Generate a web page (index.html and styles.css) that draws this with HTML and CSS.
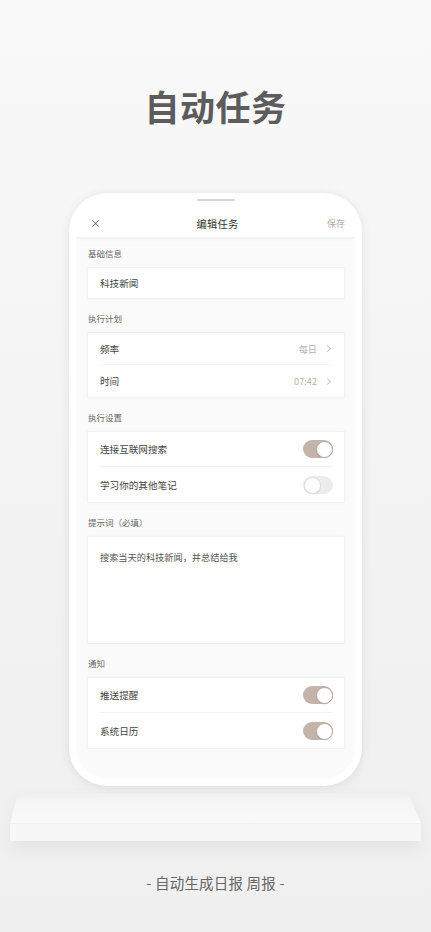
FILE: index.html
```html
<!DOCTYPE html>
<html lang="zh-CN">
<head>
    <meta charset="UTF-8">
    <meta name="viewport" content="width=device-width, initial-scale=1.0">
    <title>自动任务</title>

    <link rel="stylesheet" href="styles.css">
</head>
<body>

    <div class="page">
        <h1 class="headline">自动任务</h1>

        <div class="phone">
            <span class="side-key key-a"></span>
            <span class="side-key key-b"></span>
            <span class="side-key key-c"></span>
            <div class="notch"></div>

            <div class="screen">
                <div class="topbar">
                    <span class="close">&times;</span>
                    <span class="topbar-title">编辑任务</span>
                    <span class="save">保存</span>
                </div>

                <div class="content">
                    <div class="label first">基础信息</div>
                    <div class="card single">科技新闻</div>

                    <div class="label">执行计划</div>
                    <div class="card">
                        <div class="row">
                            <span>频率</span>
                            <span class="value">每日<i class="chev"></i></span>
                        </div>
                        <div class="row">
                            <span>时间</span>
                            <span class="value">07:42<i class="chev"></i></span>
                        </div>
                    </div>

                    <div class="label">执行设置</div>
                    <div class="card">
                        <div class="row tall">
                            <span>连接互联网搜索</span>
                            <span class="toggle on"></span>
                        </div>
                        <div class="row tall">
                            <span>学习你的其他笔记</span>
                            <span class="toggle"></span>
                        </div>
                    </div>

                    <div class="label">提示词（必填）</div>
                    <div class="card prompt">搜索当天的科技新闻，并总结给我</div>

                    <div class="label">通知</div>
                    <div class="card">
                        <div class="row tall">
                            <span>推送提醒</span>
                            <span class="toggle on"></span>
                        </div>
                        <div class="row tall">
                            <span>系统日历</span>
                            <span class="toggle on"></span>
                        </div>
                    </div>
                </div>
            </div>
        </div>

        <div class="shelf">
            <div class="shelf-top"></div>
            <div class="shelf-front"></div>
        </div>

        <p class="caption">- 自动生成日报 周报 -</p>
    </div>

</body>
</html>
```

FILE: styles.css
```css
body {
    margin: 0;
    background: linear-gradient(#f9f9fa, #f2f2f3 60%, #f0f0f1);
    font-family: "Noto Sans CJK SC", "Noto Sans", sans-serif;
}

.page {
    width: 431px;
    height: 932px;
    display: flex;
    flex-direction: column;
    align-items: center;
    overflow: hidden;
}

.headline {
    margin: 88px 0 0;
    font-size: 35px;
    line-height: 36px;
    font-weight: 700;
    color: #5c5c5c;
    letter-spacing: 0.5px;
}

/* phone body */
.phone {
    position: relative;
    margin-top: 69px;
    width: 293px;
    height: 593px;
    box-sizing: border-box;
    padding: 6px 7px 8px;
    border-radius: 38px;
    background: #fff;
    box-shadow: 0 0 10px rgba(0, 0, 0, 0.05), 0 4px 14px rgba(0, 0, 0, 0.04);
    display: flex;
    flex-direction: column;
}

.side-key {
    position: absolute;
    width: 2px;
    border-radius: 1px;
    background: #ececec;
}

.key-a { left: -2px; top: 164px; height: 36px; }
.key-b { left: -2px; top: 217px; height: 44px; }
.key-c { right: -2px; top: 215px; height: 44px; }

.notch {
    width: 38px;
    height: 2px;
    margin: 0 auto 8px;
    background: #d6d6d6;
    border-radius: 1px;
}

.screen {
    flex: 1;
    background: #fbfbfb;
    border-radius: 4px 4px 30px 30px;
    overflow: hidden;
    display: flex;
    flex-direction: column;
}

.topbar {
    height: 28px;
    flex-shrink: 0;
    display: flex;
    align-items: center;
    justify-content: space-between;
    padding: 0 10px 0 14px;
    background: #fff;
    box-shadow: 0 2px 4px rgba(0, 0, 0, 0.05);
    position: relative;
    z-index: 1;
}

.close {
    font-size: 11px;
    color: #666;
    width: 20px;
}

.topbar-title {
    font-size: 10.2px;
    color: #333;
    letter-spacing: 0.3px;
}

.save {
    font-size: 9px;
    color: #bba79b;
    width: 20px;
    text-align: right;
}

.content {
    padding: 0 10px 0 11px;
}

.label {
    margin: 13px 0 8px 1px;
    font-size: 8.5px;
    line-height: 12px;
    color: #666;
}

.label.first {
    margin-top: 10px;
}

.card {
    background: #fff;
    border: 1px solid #f2f2f2;
    box-shadow: 0 0 4px rgba(0, 0, 0, 0.04);
    padding: 0 12px;
    font-size: 9.6px;
    color: #444;
}

.single {
    height: 30px;
    line-height: 30px;
}

.prompt {
    height: 108px;
    box-sizing: border-box;
    padding-top: 12px;
    font-size: 9.2px;
    line-height: 16px;
    color: #555;
}

.row {
    height: 32px;
    box-sizing: border-box;
    display: flex;
    align-items: center;
    justify-content: space-between;
    border-bottom: 1px solid #f3f3f3;
}

.row:last-child {
    border-bottom: none;
}

.row.tall {
    height: 35px;
}

.value {
    display: flex;
    align-items: center;
    font-size: 9.2px;
    color: #c0b0a7;
}

.chev {
    width: 4px;
    height: 4px;
    margin: 0 2px 0 8px;
    border-top: 1px solid #c6c6c6;
    border-right: 1px solid #c6c6c6;
    transform: rotate(45deg);
}

.toggle {
    position: relative;
    width: 30px;
    height: 18px;
    border-radius: 9px;
    background: #ececec;
    margin-right: -1px;
}

.toggle::after {
    content: "";
    position: absolute;
    top: 1px;
    left: 1px;
    width: 15px;
    height: 15px;
    border-radius: 50%;
    background: #fff;
    border: 0.5px solid #dcdcdc;
    box-shadow: 0 1px 1px rgba(0, 0, 0, 0.06);
}

.toggle.on {
    background: #c4b3a8;
}

.toggle.on::after {
    left: 13px;
    border-color: #b8a79b;
}

/* shelf under the phone */
.shelf {
    margin-top: 7px;
    width: 411px;
    filter: drop-shadow(0 8px 8px rgba(0, 0, 0, 0.05));
}

.shelf-top {
    height: 30px;
    background: linear-gradient(#efefef, #f6f6f6 30%, #f9f9f9);
    clip-path: polygon(8px 0, 398px 0, 100% 100%, 0 100%);
}

.shelf-front {
    height: 18px;
    background: #f7f7f7;
    border-top: 1px solid #f0f0f0;
    box-sizing: border-box;
}

.caption {
    margin: 32px 0 0;
    font-size: 14.5px;
    line-height: 20px;
    color: #666;
    letter-spacing: 0.2px;
}
```
